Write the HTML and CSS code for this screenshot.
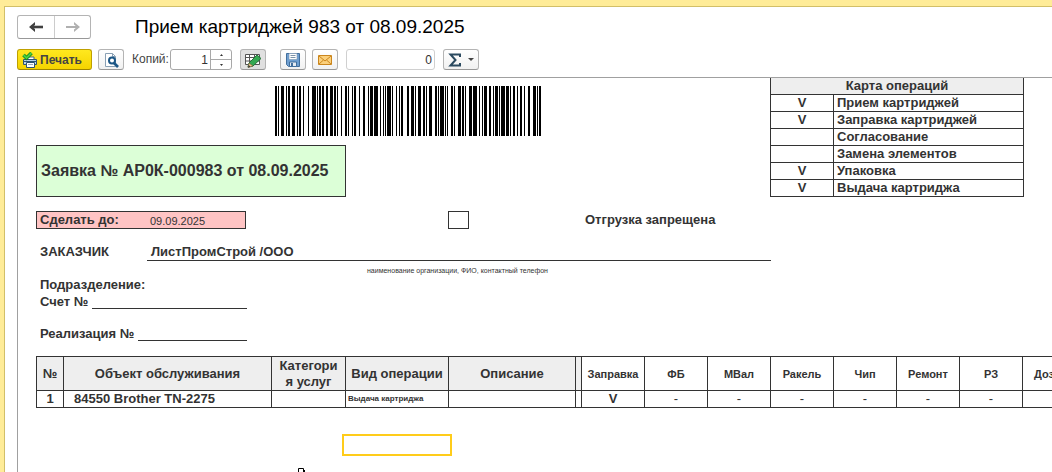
FILE: index.html
```html
<!DOCTYPE html>
<html lang="ru">
<head>
<meta charset="utf-8">
<title>Прием картриджей 983 от 08.09.2025</title>
<link rel="stylesheet" href="styles.css">
</head>
<body>
<main class="window">
  <header class="titlebar">
    <div class="nav">
      <button class="nav-btn" aria-label="Назад"><svg width="16" height="12" viewBox="0 0 16 12"><path d="M3 6h12" fill="none" stroke="#404040" stroke-width="2.600"/><path d="M7 1v3L4.500 6L7 8v3L1 6z" fill="#404040"/></svg></button>
      <button class="nav-btn" aria-label="Вперед"><svg width="16" height="12" viewBox="0 0 16 12"><path d="M1 6h12" fill="none" stroke="#b0b0b0" stroke-width="2"/><path d="M9 1v2.500L12 6L9 8.500V11l6-5z" fill="#b0b0b0"/></svg></button>
    </div>
    <h1 class="title">Прием картриджей 983 от 08.09.2025</h1>
  </header>

  <div class="toolbar">
    <button class="btn btn-print">
      <svg width="16" height="16" viewBox="0 0 16 16"><path d="M4 5h8v4H4z" fill="#fff" stroke="#47647f"/><path d="M1.500 7.500h13v5h-13z" fill="#b9d3ea" stroke="#2f5473"/><path d="M2 9.500h12" stroke="#2f5473"/><path d="M4.500 10.500h8v5h-8z" fill="#fff" stroke="#2f5473"/><path d="M6 12.500h5" stroke="#9ab"/><path d="M1.500 3l3 3 5-5" fill="none" stroke="#168a1e" stroke-width="3.600"/><path d="M1.500 3l3 3 5-5" fill="none" stroke="#48cf42" stroke-width="1.800"/></svg>
      <span>Печать</span>
    </button>
    <button class="btn btn-icon" aria-label="Предварительный просмотр">
      <svg width="16" height="16" viewBox="0 0 16 16"><path d="M2.500 1.500h7l3 3v10h-10z" fill="#fff" stroke="#8aa0b4"/><path d="M9.500 1.500v3h3" fill="none" stroke="#8aa0b4"/><circle cx="9" cy="8.500" r="3" fill="#fff" stroke="#1c5685" stroke-width="2"/><path d="M11 11l4 4" stroke="#1c5685" stroke-width="2.600"/></svg>
    </button>
    <label class="copies" for="copies">Копий:</label>
    <div class="spin">
      <input class="spin-input" id="copies" type="text" value="1">
      <div class="spin-btns">
        <button class="spin-btn" aria-label="Больше"><svg width="3" height="2" viewBox="0 0 3 2"><path d="M0 2L1.500 0L3 2z" fill="#333"/></svg></button>
        <button class="spin-btn" aria-label="Меньше"><svg width="3" height="2" viewBox="0 0 3 2"><path d="M0 0h3L1.500 2z" fill="#333"/></svg></button>
      </div>
    </div>
    <button class="btn btn-icon btn-pressed" aria-label="Редактирование">
      <svg width="18" height="16" viewBox="0 0 18 16"><path d="M1.500 2.500h14v10h-14zM1.500 5.500h14M1.500 9h14M5.500 2.500v10M10.500 2.500v10" fill="#fff" stroke="#555"/><path d="M5 11l8-8 4 3.500-8 7.500-5 1z" fill="#35a852" stroke="#26743a"/><path d="M5 11l4 3-5 1.500z" fill="#f1c489" stroke="#6b5a3a" stroke-width=".6"/><path d="M4 15.500l.8-2.500 1.600 1.700z" fill="#333"/></svg>
    </button>
    <button class="btn btn-icon btn-save" aria-label="Сохранить">
      <svg width="16" height="16" viewBox="0 0 16 16"><path d="M1.500 1.500h13v13h-11l-2-2z" fill="#6f9fd0" stroke="#426f9d"/><path d="M4 1.500h8v6H4z" fill="#fff" stroke="#7895b2" stroke-width=".6"/><path d="M5.500 3.500h5M5.500 5.500h5" stroke="#7d93a8"/><path d="M4.500 10h7v4.500h-7z" fill="#e6ecf2" stroke="#426f9d"/><path d="M6 11h2v3H6z" fill="#426f9d"/></svg>
    </button>
    <button class="btn btn-icon" aria-label="Отправить">
      <svg width="16" height="14" viewBox="0 0 16 14"><path d="M1.500 2.500h13v9h-13z" fill="#fbd07c" stroke="#cb861d"/><path d="M2 3l6 5 6-5M2 11l4.500-4M14 11L9.500 7" fill="none" stroke="#cb861d"/></svg>
    </button>
    <input class="sum" type="text" value="0" aria-label="Сумма">
    <button class="btn btn-sigma" aria-label="Сумма выделенных">
      <svg width="14" height="14" viewBox="0 0 14 14"><path d="M12 4V1.500H2.500L7.500 7l-5 5.500H12V10" fill="none" stroke="#2b4a60" stroke-width="2"/></svg>
      <svg width="6" height="3" viewBox="0 0 6 3"><path d="M0 0h6L3 3z" fill="#444"/></svg>
    </button>
  </div>

  <section class="sheet">
    <div class="top">
      <div class="top-left">
        <svg class="barcode" width="266" height="50" viewBox="0 0 266 50" role="img" aria-label="Штрихкод"><path d="M0 25H266" stroke="#000" stroke-width="50" stroke-dasharray="2 1 1 2 3 2 1 1 2 2 3 2 1 1 2 2 1 4 1 3 4 1 1 1 2 1 2 2 2 2 3 1 2 1 1 3 1 3 2 1 1 3 1 1 2 3 1 3 2 3 1 1 3 1 4 2 1 2 1 1 1 1 4 1 1 3 1 2 1 1 2 4 2 2 3 1 1 2 3 2 2 1 1 2 3 3 2 1 1 1 4 1 1 1 1 3 2 1 1 3 3 1 2 1 1 3 3 1 4 2 1 2 1 1 3 2 2 2 1 1 3 1 1 1 4 1 3 1 1 2 2 2 1 2 2 2 1 3 2 3 3 1 1 1 2 300"/></svg>
        <div class="order">Заявка № АР0К-000983 от 08.09.2025</div>
      </div>
      <table class="ops">
        <colgroup><col class="c-mark"><col class="c-name"></colgroup>
        <thead><tr><th colspan="2">Карта операций</th></tr></thead>
        <tbody>
          <tr><td class="mark">V</td><td>Прием картриджей</td></tr>
          <tr><td class="mark">V</td><td>Заправка картриджей</td></tr>
          <tr><td class="mark"></td><td>Согласование</td></tr>
          <tr><td class="mark"></td><td>Замена элементов</td></tr>
          <tr><td class="mark">V</td><td>Упаковка</td></tr>
          <tr><td class="mark">V</td><td>Выдача картриджа</td></tr>
        </tbody>
      </table>
    </div>

    <div class="due-row">
      <div class="due"><span class="due-label">Сделать до:</span><span class="due-date">09.09.2025</span></div>
      <input class="hold-box" id="hold" type="checkbox">
      <label for="hold">Отгрузка запрещена</label>
    </div>

    <div class="customer">
      <span class="customer-label">ЗАКАЗЧИК</span>
      <span class="customer-name">ЛистПромСтрой /ООО</span>
    </div>
    <div class="hint">наименование организации, ФИО, контактный телефон</div>

    <div class="line">Подразделение:</div>
    <div class="line">Счет №<span class="blank"></span></div>
    <div class="line line-gap">Реализация №<span class="blank"></span></div>

    <table class="items">
      <colgroup><col class="c-num"><col class="c-object"><col class="c-cat"><col class="c-kind"><col class="c-desc"><col class="c-split"><col class="c-op" span="8"></colgroup>
      <thead>
        <tr><th>№</th><th>Объект обслуживания</th><th>Категори<br>я услуг</th><th>Вид операции</th><th>Описание</th><th></th><th class="op">Заправка</th><th class="op">ФБ</th><th class="op">МВал</th><th class="op">Ракель</th><th class="op">Чип</th><th class="op">Ремонт</th><th class="op">РЗ</th><th class="op op-last">Доз</th></tr>
      </thead>
      <tbody>
        <tr><td>1</td><td class="object">84550 Brother TN-2275</td><td></td><td class="kind">Выдача картриджа</td><td></td><td></td><td>V</td><td class="dash">-</td><td class="dash">-</td><td class="dash">-</td><td class="dash">-</td><td class="dash">-</td><td class="dash">-</td><td></td></tr>
      </tbody>
    </table>
    <div class="selection"></div>
    <svg class="pointer" width="7" height="4" viewBox="0 0 7 4"><path d="M.5 4V.5h5V4" fill="#fff" stroke="#000"/><path d="M6.500 2v2" stroke="#000"/></svg>
  </section>
</main>
</body>
</html>
```

FILE: styles.css
```css
* { box-sizing: border-box; }

body {
  margin: 0;
  font-family: "Liberation Sans", Arial, sans-serif;
  font-size: 12px;
  color: #333;
  background: #ffec98;
}

button, input { font: inherit; color: inherit; margin: 0; padding: 0; }

.window {
  display: flex;
  flex-direction: column;
  height: 100vh;
  border-top: 6px solid #ffec98;
  border-left: 4px solid #ffec98;
  background: #fff;
  box-shadow: inset 1px 1px 0 #d2bf68;
  padding: 9px 0 0 13px;
}

.titlebar { display: flex; align-items: center; gap: 44px; height: 24px; }

.nav {
  display: flex;
  height: 24px;
  border: 1px solid #b4b4b4;
  border-bottom-color: #989898;
  border-radius: 3px;
}

.nav-btn {
  display: flex;
  align-items: center;
  justify-content: center;
  width: 36px;
  border: 0;
  background: none;
}
.nav-btn + .nav-btn { border-left: 1px solid #ccc; }

.title { margin: 0; font-size: 19px; font-weight: 400; line-height: 24px; color: #000; white-space: nowrap; }

.toolbar { display: flex; align-items: stretch; height: 21px; margin: 10px 0 7px; }

.btn {
  display: flex;
  align-items: center;
  justify-content: center;
  border: 1px solid #b4b4b4;
  border-bottom-color: #989898;
  border-radius: 3px;
  background: linear-gradient(#fff, #f1f1f1);
}
.btn svg { flex: none; }
.btn-icon { width: 26px; margin-right: 6px; }
.btn-pressed { background: #e0e0e0; margin: 0 14px 0 8px; }

.btn-print {
  width: 75px;
  justify-content: flex-start;
  gap: 2px;
  padding-left: 4px;
  margin-right: 6px;
  border-color: #bfa000;
  border-bottom-color: #a08600;
  background: linear-gradient(#ffe81f, #f5d400);
  font-weight: 700;
  color: #444;
}

.copies { width: 38px; margin-left: 2px; line-height: 21px; color: #444; }

.spin {
  display: flex;
  width: 62px;
  border: 1px solid #a8a8a8;
  border-radius: 3px;
  background: #fff;
}
.spin-input { width: 39px; padding-right: 2px; border: 0; background: none; text-align: right; outline: 0; }
.spin-btns { display: flex; flex-direction: column; flex: 1; border-left: 1px solid #a8a8a8; }
.spin-btn { display: flex; flex: 1; align-items: center; justify-content: center; border: 0; background: none; }
.spin-btn + .spin-btn { border-top: 1px solid #a8a8a8; }

.sum {
  width: 89px;
  margin: 0 8px 0 2px;
  padding-right: 2px;
  border: 1px solid #d0d0d0;
  border-radius: 3px;
  text-align: right;
}
.btn-sigma { width: 36px; gap: 6px; }

.sheet {
  position: relative;
  flex: 1;
  overflow: hidden;
  border-top: 1px solid #a0a0a0;
  border-left: 1px solid #a0a0a0;
  padding-left: 18px;
  font-size: 13px;
  font-weight: 700;
  line-height: 16px;
  white-space: nowrap;
}

.top { display: grid; grid-template-columns: 734px 253px; align-items: start; }
.top-left { padding-top: 8px; }
.barcode { display: block; margin: 0 0 9px 239px; }

.order {
  width: 310px;
  padding-left: 4px;
  border: 1px solid #333;
  background: #dcffd7;
  font-size: 16px;
  line-height: 50px;
}

table { border-collapse: collapse; table-layout: fixed; }
th, td { height: 17px; padding: 0; border: 1px solid #333; }
th { background: #eee; }

.ops { width: 253px; }
.ops th { height: 16px; border-top: 0; }
.ops td { padding-left: 3px; }
.ops .mark { padding: 0; text-align: center; }
.ops thead { line-height: 15px; }
.c-mark { width: 63px; }
.c-name { width: 190px; }

.due-row { display: flex; align-items: center; height: 18px; margin-top: 14px; }
.due { display: flex; width: 210px; height: 18px; padding-left: 3px; border: 1px solid #333; background: #ffc4c4; }
.due-label { width: 110px; }
.due-date { font-size: 11px; font-weight: 400; line-height: 18px; }
.hold-box {
  appearance: none;
  width: 21px;
  height: 18px;
  margin: 0 116px 0 202px;
  border: 1px solid #333;
  background: #fff;
}

.customer { display: flex; height: 18px; margin-top: 14px; padding-left: 4px; line-height: 18px; }
.customer-label { width: 107px; }
.customer-name { width: 624px; padding-left: 4px; border-bottom: 1px solid #333; }
.hint { padding: 5px 0 0 331px; font-size: 7px; font-weight: 400; line-height: 10px; }

.line { display: flex; gap: 4px; width: 211px; height: 17px; padding-left: 4px; line-height: 17px; }
.line-gap { margin-top: 15px; }
.blank { flex: 1; height: 16px; border-bottom: 1px solid #333; }

.items { width: 1050px; margin-top: 14px; text-align: center; }
.items th { height: 34px; }
.items .op { background: #fff; font-size: 11px; }
.items .op-last { padding-left: 11px; text-align: left; }
.items .object { padding-left: 10px; text-align: left; }
.items .kind { padding-left: 2px; font-size: 8px; text-align: left; }
.items .dash { font-weight: 400; }
.c-num { width: 27px; }
.c-object { width: 208px; }
.c-cat { width: 74px; }
.c-kind { width: 103px; }
.c-desc { width: 127px; }
.c-split { width: 6px; }
.c-op { width: 63px; }

.selection { width: 110px; height: 22px; margin: 26px 0 0 306px; border: 2px solid #ffcc1a; }
.pointer { position: absolute; left: 280px; bottom: 0; }
```
